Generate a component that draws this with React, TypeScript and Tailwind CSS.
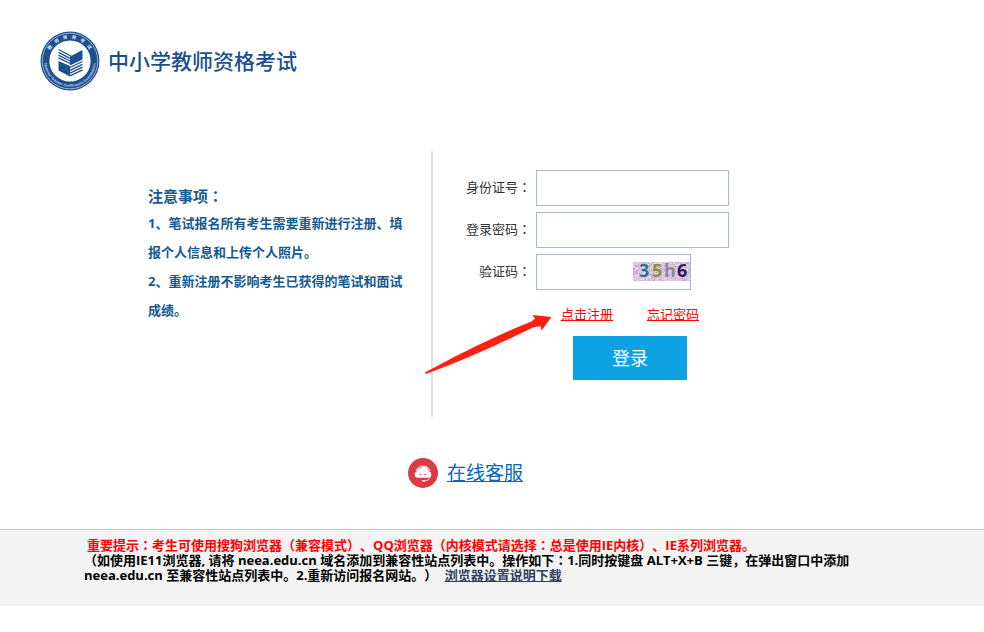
import { useState } from "react"

function Logo() {
  return (
    <svg className="h-[60px] w-[60px] shrink-0" viewBox="0 0 60 60" role="img" aria-label="教师资格考试">
      <circle cx="30" cy="30" r="29.5" fill="#1d4f8f" />
      <circle cx="30" cy="30" r="27.8" fill="none" stroke="#b9cbe2" strokeWidth="0.8" />
      <circle cx="30" cy="30" r="20.6" fill="#fff" />
      <defs>
        <path id="ring-top" d="M7.600 30a22.400 22.400 0 0 1 44.800 0" />
        <path id="ring-bottom" d="M4.200 30a25.800 25.800 0 0 0 51.600 0" />
      </defs>
      <text fill="#dfe8f4" fontSize="4.5" fontWeight="700" textAnchor="middle" letterSpacing="4" className="font-['Noto_Sans_CJK_SC',sans-serif]">
        <textPath href="#ring-top" startOffset="52%">教师资格考试</textPath>
      </text>
      <text fill="#c5d5e9" fontSize="3.7" fontWeight="700" textAnchor="middle" className="font-['Liberation_Sans',sans-serif]">
        <textPath href="#ring-bottom" startOffset="50%">National Teacher Certification Examination</textPath>
      </text>
      <g fill="#1d4f8f">
        <path d="M18.500 30 30 35V45.500L18.500 39.500z" />
        <path d="M30 25.500 42.500 19V28.500L30 34.500z" />
      </g>
      <g stroke="#1d4f8f" strokeWidth="1.3" fill="none">
        <path d="M18.500 18.500 31 25M18.500 21.300 30 27.300M18.500 24.100 30 30M18.500 26.900 30 32.500" />
        <path d="M42.500 30.500 30 36.500M42.500 33.300 30 39.300M42.500 36.100 30 42.100M42.500 38.900 30 44.900" />
      </g>
    </svg>
  )
}

function ServiceIcon() {
  return (
    <svg className="h-[30px] w-[30px]" viewBox="0 0 30 30" aria-hidden="true">
      <circle cx="15" cy="15" r="15" fill="#dc3a44" />
      <path d="M8 13a7.200 6.400 0 0 1 14 0" fill="none" stroke="#fff" strokeWidth="0.9" />
      <path
        d="M9.500 19.800a3.200 3.200 0 0 1-.8-6.200 3.600 3.600 0 0 1 4-3.700 4.600 4.600 0 0 1 7.900 3.400 3.300 3.300 0 0 1-.1 6.500z"
        fill="#fff"
      />
      <path d="M22.500 18.500c-.8 2.600-2.600 4-5.200 4.200" fill="none" stroke="#fff" strokeWidth="0.8" />
      <rect x="14" y="22" width="3.500" height="1.500" rx="0.700" fill="#fff" />
      <circle cx="12.500" cy="16.500" r="0.800" fill="#dc3a44" />
      <circle cx="17" cy="16.500" r="0.800" fill="#dc3a44" />
    </svg>
  )
}

// Pseudo random speckles behind the captcha characters
const speckColors = ["#b39abf", "#f3e4f6", "#a9a3b0", "#e2c4e8", "#c4b9cc", "#fff"]
const specks = Array.from({ length: 420 }, (_, i) => ({
  x: (i * 37 + ((i * i) % 11)) % 57,
  y: (i * 13 + ((i * i * 3) % 17)) % 19,
  color: speckColors[(i * 7 + (i % 5)) % speckColors.length],
}))

function Captcha() {
  return (
    <svg className="h-[19px] w-[57px] overflow-visible" viewBox="0 0 57 19" role="img" aria-label="验证码图片">
      <rect width="57" height="19" fill="#dcc3e2" />
      {specks.map((s, i) => (
        <rect key={i} x={s.x} y={s.y} width="1" height="1" fill={s.color} />
      ))}
      <g fontSize="18" fontWeight="700" className="font-['Open_Sans',sans-serif]">
        <text x="6" y="15" fill="#2b7386">3</text>
        <text x="19" y="15" fill="#8a942e">5</text>
        <text x="31" y="15" fill="#8d8697">h</text>
        <text x="44" y="15" fill="#2a1b60">6</text>
      </g>
    </svg>
  )
}

function Colon() {
  return <span className="font-['Noto_Sans_CJK_JP',sans-serif] leading-none">：</span>
}

const labelClass = "w-[98px] text-right text-[13px] text-[#333]"
const inputClass = "h-9 border border-[#a3bad0] bg-white px-2 text-sm outline-none"

export default function App() {
  const [idNumber, setIdNumber] = useState("")
  const [password, setPassword] = useState("")
  const [code, setCode] = useState("")

  return (
    <div className="min-h-screen bg-white font-['Open_Sans','Noto_Sans_CJK_SC',sans-serif] [text-spacing-trim:space-all]">
      {/* Header */}
      <header className="flex items-center gap-2 pt-[31px] pl-10">
        <Logo />
        <h1 className="text-[21px] leading-8 font-medium text-[#1d4f8f]">中小学教师资格考试</h1>
      </header>

      <main>
        <div className="mt-[60px] grid grid-cols-[44%_1fr]">
          {/* Notes */}
          <section className="min-h-[266px] border-r-2 border-[#e2e2e2] pt-8 pl-[148px] font-bold text-[#155a91]">
            <h2 className="text-[15px] leading-[26px]">
              注意事项<Colon />
            </h2>
            <div className="w-[264px] text-[13px] leading-[29px]">
              <p>1、笔试报名所有考生需要重新进行注册、填报个人信息和上传个人照片。</p>
              <p>2、重新注册不影响考生已获得的笔试和面试成绩。</p>
            </div>
          </section>

          {/* Login form */}
          <form className="relative flex flex-col gap-[6px] pt-[19px]" onSubmit={(e) => e.preventDefault()}>
            <div className="flex items-center gap-[5px]">
              <label htmlFor="idNumber" className={labelClass}>
                身份证号<Colon />
              </label>
              <input
                id="idNumber"
                type="text"
                value={idNumber}
                onChange={(e) => setIdNumber(e.target.value)}
                className={`${inputClass} w-[193px]`}
              />
            </div>
            <div className="flex items-center gap-[5px]">
              <label htmlFor="password" className={labelClass}>
                登录密码<Colon />
              </label>
              <input
                id="password"
                type="password"
                value={password}
                onChange={(e) => setPassword(e.target.value)}
                className={`${inputClass} w-[193px]`}
              />
            </div>
            <div className="flex items-center gap-[5px]">
              <label htmlFor="code" className={labelClass}>
                验证码<Colon />
              </label>
              <div className="relative">
                <input
                  id="code"
                  type="text"
                  value={code}
                  onChange={(e) => setCode(e.target.value)}
                  className={`${inputClass} block w-[155px]`}
                />
                <span className="absolute top-2 right-px">
                  <Captcha />
                </span>
              </div>
            </div>

            <div className="flex gap-[34px] pt-2 pl-32 text-[13px] leading-5 text-[#f00] underline">
              <a href="#register">点击注册</a>
              <a href="#forgot">忘记密码</a>
            </div>
            <div className="pt-[6px] pl-[140px]">
              <button type="submit" className="h-11 w-[114px] bg-[#0fa2e2] text-lg text-white">
                登录
              </button>
            </div>

            {/* Arrow pointing to the register link */}
            <svg
              className="pointer-events-none absolute top-[162px] -left-2 h-[62px] w-[128px]"
              viewBox="0 0 128 62"
              aria-hidden="true"
            >
              <path d="M0 59.500C30 43 70 23 106.500 8.500L110 5.500 107.500 2 126.500 4 116.500 17.500 115.500 13 108 14.500C70 33 35 48.500 0.800 61z" fill="#ff1e10" />
            </svg>
          </form>
        </div>

        <div className="mt-10 flex justify-center pr-[53px]">
          <a href="#service" className="flex items-center gap-[9px] text-[19px] leading-8 text-[#0066c8]">
            <ServiceIcon />
            <span className="underline">在线客服</span>
          </a>
        </div>
      </main>

      {/* Browser notice */}
      <footer className="mt-10 min-h-[77px] border-t border-[#ccc] bg-[#f3f3f3] px-[84px] pt-2 text-[13px] leading-[15px] font-bold text-black">
        <p className="pl-[3px] text-[#f00]">
          重要提示<Colon />考生可使用搜狗浏览器（兼容模式）、QQ浏览器（内核模式请选择<Colon />总是使用IE内核）、IE系列浏览器。
        </p>
        <p>
          （如使用IE11浏览器, 请将 neea.edu.cn 域名添加到兼容性站点列表中。操作如下<Colon />1.同时按键盘 ALT+X+B 三键，在弹出窗口中添加
          neea.edu.cn 至兼容性站点列表中。2.重新访问报名网站。）{" "}
          <a href="#download" className="ml-1 text-[#343f63] underline">浏览器设置说明下载</a>
        </p>
      </footer>
    </div>
  )
}
